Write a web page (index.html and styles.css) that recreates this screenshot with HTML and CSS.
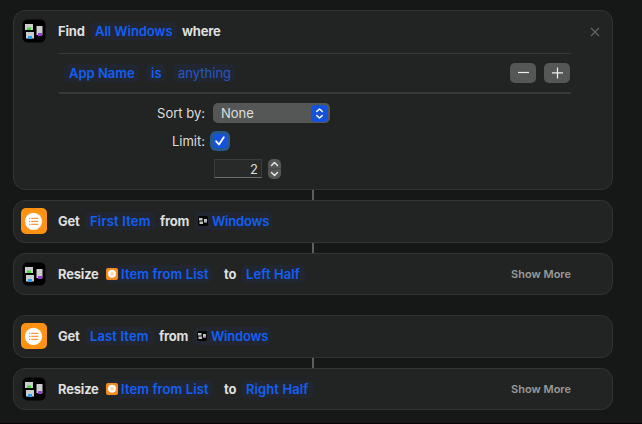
FILE: index.html
```
<!DOCTYPE html>
<html lang="en">
<head>
<meta charset="utf-8">
<title>Shortcut</title>
<link rel="stylesheet" href="styles.css">
</head>
<body>
<svg class="defs" width="0" height="0">
  <symbol id="windows" viewBox="0 0 24 24">
    <rect x="0.5" y="0.5" width="23" height="23" rx="5" fill="#000"/>
    <path fill="#ccc" d="M3 5h8v6H3zM4 13h8v6.500H4zM14.500 7h6v9h-6z"/>
    <path fill="#45d83d" d="M5 8.500h4V11H5z"/>
    <path fill="#2a9df4" d="M6 17h4v3H6z"/>
    <path fill="#9a3fd6" d="M16 14h4v3h-4z"/>
  </symbol>
  <symbol id="list" viewBox="0 0 26 26">
    <rect width="26" height="26" rx="5" fill="#ff9213"/>
    <circle cx="12.500" cy="13.300" r="8.600" fill="#fff"/>
    <path d="M8 10.300h1.300M10.200 10.300h7M8 13.300h1.300M10.200 13.300h7M8 16.300h1.300M10.200 16.300h7" stroke="#f8983a" stroke-width="1.300"/>
  </symbol>
  <symbol id="list-small" viewBox="0 0 12 12">
    <rect width="12" height="12" rx="2" fill="#f78a1d"/>
    <circle cx="6" cy="5.800" r="4" fill="#fff"/>
    <circle cx="6" cy="5.800" r="1.800" fill="#fbd3a8"/>
  </symbol>
  <symbol id="windows-small" viewBox="0 0 10 10">
    <rect width="10" height="10" rx="2" fill="#050505"/>
    <path fill="#bbc5bd" d="M1 2h3.500v2.500H1zM1.500 5.500H5V8H1.500zM6 3h3v3.500H6z"/>
    <path fill="#8e64ad" d="M7 5.500h2v1.200H7z"/>
  </symbol>
</svg>
<main class="editor">
  <section class="card find">
    <header class="row">
      <svg class="icon app"><use href="#windows"/></svg>
      <span class="word w-find">Find</span>
      <span class="token t-all">All Windows</span>
      <span class="word w-where">where</span>
      <svg class="close" viewBox="0 0 10 10"><path d="M1 1l8 8M9 1L1 9"/></svg>
    </header>
    <div class="filter">
      <span class="token t-app">App Name</span>
      <span class="token t-is">is</span>
      <span class="token t-any">anything</span>
      <div class="buttons">
        <button aria-label="Remove"><svg viewBox="0 0 26 20"><path d="M8 9.500h11"/></svg></button>
        <button aria-label="Add"><svg viewBox="0 0 26 20"><path d="M8 9.800h11M13.500 4.500v11"/></svg></button>
      </div>
    </div>
    <div class="options">
      <label>Sort by:</label>
      <div class="select"><span>None</span><svg viewBox="0 0 17 17"><path d="M5.700 6.600l2.800-2.700 2.800 2.700M5.700 10.400l2.800 2.700 2.800-2.700"/></svg></div>
      <label>Limit:</label>
      <div class="check"><svg viewBox="0 0 14 14"><path d="M3.200 7.300l2.800 3.200 4.800-7.300"/></svg></div>
      <span></span>
      <div class="number"><div class="field">2</div><svg class="stepper" viewBox="0 0 13 20"><rect width="13" height="20" rx="5"/><path class="split" d="M0 10h13"/><path d="M3.500 6.500l3-3 3 3M3.500 13.500l3 3 3-3"/></svg></div>
    </div>
  </section>
  <div class="link"></div>
  <section class="card row get">
    <svg class="icon"><use href="#list"/></svg>
    <span class="word w-get">Get</span>
    <span class="token t-first">First Item</span>
    <span class="word w-from">from</span>
    <span class="token variable t-windows"><svg><use href="#windows-small"/></svg><span>Windows</span></span>
  </section>
  <div class="link"></div>
  <section class="card row resize">
    <svg class="icon app"><use href="#windows"/></svg>
    <span class="word w-resize">Resize</span>
    <span class="token variable t-item"><svg><use href="#list-small"/></svg><span>Item from List</span></span>
    <span class="word w-to">to</span>
    <span class="token t-left">Left Half</span>
    <span class="more">Show More</span>
  </section>
  <div class="space"></div>
  <section class="card row get">
    <svg class="icon"><use href="#list"/></svg>
    <span class="word w-get">Get</span>
    <span class="token t-last">Last Item</span>
    <span class="word w-from">from</span>
    <span class="token variable t-windows"><svg><use href="#windows-small"/></svg><span>Windows</span></span>
  </section>
  <div class="link"></div>
  <section class="card row resize">
    <svg class="icon app"><use href="#windows"/></svg>
    <span class="word w-resize">Resize</span>
    <span class="token variable t-item"><svg><use href="#list-small"/></svg><span>Item from List</span></span>
    <span class="word w-to">to</span>
    <span class="token t-right">Right Half</span>
    <span class="more">Show More</span>
  </section>
</main>
</body>
</html>
```
FILE: styles.css
```
* { box-sizing: border-box; }
body {
  margin: 0;
  height: 424px;
  overflow: hidden;
  background: #161817;
  border-bottom: 1px solid #090208;
  color: #dedfde;
  font: 600 13px/18px Inter, "Liberation Sans", sans-serif;
}
.defs { position: absolute; }
.editor { width: 600px; margin: 10px 0 0 13px; }
.card {
  background: #222423;
  border: 1px solid #323433;
  border-radius: 12px;
}
.find { height: 180px; }
.get { height: 43px; }
.resize { height: 42px; }
.link { width: 2px; height: 10px; margin-left: 299px; background: #5d5e64; }
.space { height: 20px; }
.row { display: flex; align-items: center; padding-left: 7px; }
.row.get { padding-bottom: 1px; }
.find .row { height: 40px; }
.icon { flex: none; width: 26px; height: 26px; margin-right: 11px; }
.icon.app { width: 24px; height: 24px; margin: 0 12px 0 1px; }
.word, .token { flex: none; white-space: nowrap; }
.word { font-weight: 700; letter-spacing: -0.2px; }
.token {
  height: 18px;
  padding-left: 5px;
  border-radius: 5px;
  background: #222631;
  color: #1260f5;
}
.w-find { width: 32px; }
.t-all { width: 87px; margin-right: 5px; letter-spacing: -0.05px; }
.close { width: 10px; height: 10px; margin: 1px 12px 0 auto; fill: none; stroke: #646665; stroke-width: 1.1; }
.filter {
  display: flex;
  align-items: center;
  width: 512px;
  height: 42px;
  margin: 2px 0 0 45px;
  padding-left: 5px;
  padding-bottom: 1px;
  border-top: 1px solid #383a39;
  border-bottom: 2px solid #383a39;
}
.filter { height: 41px; padding-bottom: 0; }
.t-app { width: 75px; margin-right: 7px; }
.t-is { width: 20px; margin-right: 7px; }
.t-any { width: 62px; font-weight: 400; color: #2459c8; }
.buttons { display: flex; gap: 8px; margin-left: auto; margin-right: 1px; }
button { width: 26px; height: 20px; padding: 0; border: 0; border-radius: 5px; background: #555756; }
button svg { display: block; fill: none; stroke: #eee; stroke-width: 1.2; }
.options {
  display: grid;
  grid-template-columns: 146px auto;
  grid-template-rows: 20px 20px 20px;
  row-gap: 8px;
  column-gap: 9px;
  margin: 9px 0 0 45px;
  font-weight: 400;
  align-items: center;
}
.options label { text-align: right; }
.select { display: flex; justify-content: space-between; align-items: center; width: 117px; height: 20px; margin-left: -1px; padding: 0 2px 0 8px; border-radius: 5px; background: #555756; }
.select svg { width: 17px; height: 17px; border-radius: 4px; background: #1552da; fill: none; stroke: #fff; stroke-width: 1.4; stroke-linecap: round; stroke-linejoin: round; }
.check { width: 20px; height: 20px; margin-left: -4px; padding: 3px; border-radius: 6px; background: #245989; }
.check svg { display: block; width: 14px; height: 14px; border-radius: 3px; background: #1551dd; fill: none; stroke: #fff; stroke-width: 1.8; stroke-linecap: round; stroke-linejoin: round; }
.number { display: flex; gap: 6px; }
.field { width: 48px; height: 19px; padding-right: 3px; border: 1px solid #3b3d3c; border-bottom-color: #6b6d6c; background: #282a29; text-align: right; line-height: 19px; }
.stepper { width: 13px; height: 20px; fill: #555756; stroke: #eee; stroke-width: 1.4; stroke-linecap: round; stroke-linejoin: round; }
.stepper rect { stroke: none; }
.stepper path { fill: none; }
.stepper .split { stroke: #434544; stroke-width: 1; }
.w-get { width: 27px; }
.t-first { width: 70px; margin-right: 5px; letter-spacing: 0.17px; }
.t-last { width: 69px; margin-right: 5px; letter-spacing: 0.12px; }
.w-from { width: 35px; }
.variable { display: flex; align-items: center; padding: 0; }
.t-windows { width: 77px; letter-spacing: -0.2px; }
.t-windows svg { width: 10px; height: 10px; margin: 0 4px 0 3px; }
.w-resize { width: 48px; }
.t-item { width: 106px; margin-right: 12px; letter-spacing: 0.1px; }
.t-item svg { width: 12px; height: 12px; margin-right: 3px; }
.w-to { width: 17px; }
.t-left { width: 64px; letter-spacing: 0.1px; }
.t-right { width: 72px; letter-spacing: 0.1px; }
.more { margin: 0 41px 0 auto; color: #999b9a; font-size: 11px; }
```
